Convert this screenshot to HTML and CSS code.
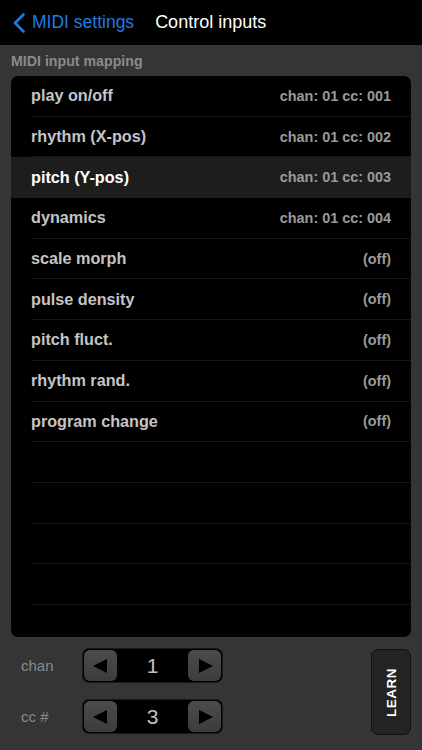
FILE: index.html
```html
<!DOCTYPE html>
<html>
<head>
<meta charset="utf-8">
<link rel="stylesheet" href="styles.css">
</head>
<body>
<div class="screen">
  <div class="nav">
    <div class="back">
      <svg class="chev" width="14" height="20" viewBox="0 0 14 20"><path d="M11.5 1.5 L3 10 L11.5 18.5" fill="none" stroke="#1f7be0" stroke-width="2.6" stroke-linecap="round" stroke-linejoin="round"/></svg>
      <span class="back-text">MIDI settings</span>
    </div>
    <div class="title">Control inputs</div>
  </div>
  <div class="section-label">MIDI input mapping</div>
  <div class="panel">
    <div class="row"><span class="name">play on/off</span><span class="val">chan: 01 cc: 001</span></div>
    <div class="row"><span class="name">rhythm (X-pos)</span><span class="val">chan: 01 cc: 002</span></div>
    <div class="row sel"><span class="name">pitch (Y-pos)</span><span class="val">chan: 01 cc: 003</span></div>
    <div class="row"><span class="name">dynamics</span><span class="val">chan: 01 cc: 004</span></div>
    <div class="row"><span class="name">scale morph</span><span class="val">(off)</span></div>
    <div class="row"><span class="name">pulse density</span><span class="val">(off)</span></div>
    <div class="row"><span class="name">pitch fluct.</span><span class="val">(off)</span></div>
    <div class="row"><span class="name">rhythm rand.</span><span class="val">(off)</span></div>
    <div class="row"><span class="name">program change</span><span class="val">(off)</span></div>
    <div class="row"></div>
    <div class="row"></div>
    <div class="row"></div>
    <div class="row"></div>
    <div class="row"></div>
  </div>
  <div class="controls">
    <div class="steppers">
      <div class="stepper-line">
        <span class="ctl-label">chan</span>
        <div class="stepper">
          <div class="sbtn"><span class="tri left"></span></div>
          <div class="num">1</div>
          <div class="sbtn"><span class="tri right"></span></div>
        </div>
      </div>
      <div class="stepper-line">
        <span class="ctl-label">cc #</span>
        <div class="stepper">
          <div class="sbtn"><span class="tri left"></span></div>
          <div class="num">3</div>
          <div class="sbtn"><span class="tri right"></span></div>
        </div>
      </div>
    </div>
    <div class="learn"><span class="learn-text">LEARN</span></div>
  </div>
</div>
</body>
</html>
```
FILE: styles.css
```css
html, body {
  margin: 0;
  padding: 0;
}
body {
  background: #353535;
  font-family: "Liberation Sans", Arial, sans-serif;
}
.screen {
  width: 422px;
  height: 750px;
  overflow: hidden;
  display: flex;
  flex-direction: column;
}
.nav {
  height: 45px;
  background: #000;
  display: flex;
  align-items: center;
  flex-shrink: 0;
}
.back {
  display: flex;
  align-items: center;
  margin-left: 12px;
  gap: 6px;
}
.chev {
  display: block;
}
.back-text {
  color: #1f7be0;
  font-size: 17.5px;
}
.title {
  color: #fff;
  font-size: 18px;
  margin-left: 21px;
}
.section-label {
  color: #8a8a8a;
  font-weight: bold;
  font-size: 14.2px;
  line-height: 16px;
  margin: 8px 0 7px 11px;
}
.panel {
  margin: 0 11px;
  height: 561px;
  background: #000;
  border-radius: 7px;
  overflow: hidden;
  flex-shrink: 0;
}
.row {
  height: 40.7px;
  box-sizing: border-box;
  margin-left: 20px;
  padding-right: 20px;
  border-bottom: 1px solid #151515;
  display: flex;
  align-items: center;
  justify-content: space-between;
}
.row.sel {
  background: #1d1d1d;
  margin-left: 0;
  padding-left: 20px;
  border-bottom-color: #1d1d1d;
}
.name {
  color: #c4c4c4;
  font-weight: bold;
  font-size: 16.2px;
}
.sel .name {
  color: #fff;
}
.val {
  color: #9a9a9a;
  font-weight: bold;
  font-size: 14.4px;
}
.controls {
  display: flex;
  justify-content: space-between;
  padding: 11px 11px 0 21px;
}
.steppers {
  display: flex;
  flex-direction: column;
  gap: 16px;
}
.stepper-line {
  display: flex;
  align-items: center;
}
.ctl-label {
  width: 61px;
  color: #8a8a8a;
  font-size: 15px;
}
.stepper {
  width: 141px;
  height: 35px;
  box-sizing: border-box;
  background: #000;
  border: 1px solid #1a1a1a;
  border-radius: 7px;
  display: flex;
  align-items: center;
  justify-content: space-between;
  padding: 1px;
}
.sbtn {
  width: 33px;
  height: 31px;
  border-radius: 6px;
  background: linear-gradient(#4c4c4c, #3c3c3c);
  display: flex;
  align-items: center;
  justify-content: center;
}
.tri {
  width: 0;
  height: 0;
  border-top: 7.5px solid transparent;
  border-bottom: 7.5px solid transparent;
}
.tri.left {
  border-right: 14px solid #000;
  margin-right: 2px;
}
.tri.right {
  border-left: 14px solid #000;
  margin-left: 2px;
}
.num {
  color: #c0c0c0;
  font-size: 21px;
}
.learn {
  width: 40px;
  height: 86px;
  box-sizing: border-box;
  margin-top: 1px;
  background: #232323;
  border: 1.5px solid #111;
  border-radius: 7px;
  display: flex;
  align-items: center;
  justify-content: center;
}
.learn-text {
  color: #fff;
  font-weight: bold;
  font-size: 13.5px;
  letter-spacing: 0.5px;
  transform: rotate(-90deg);
  white-space: nowrap;
}
```
